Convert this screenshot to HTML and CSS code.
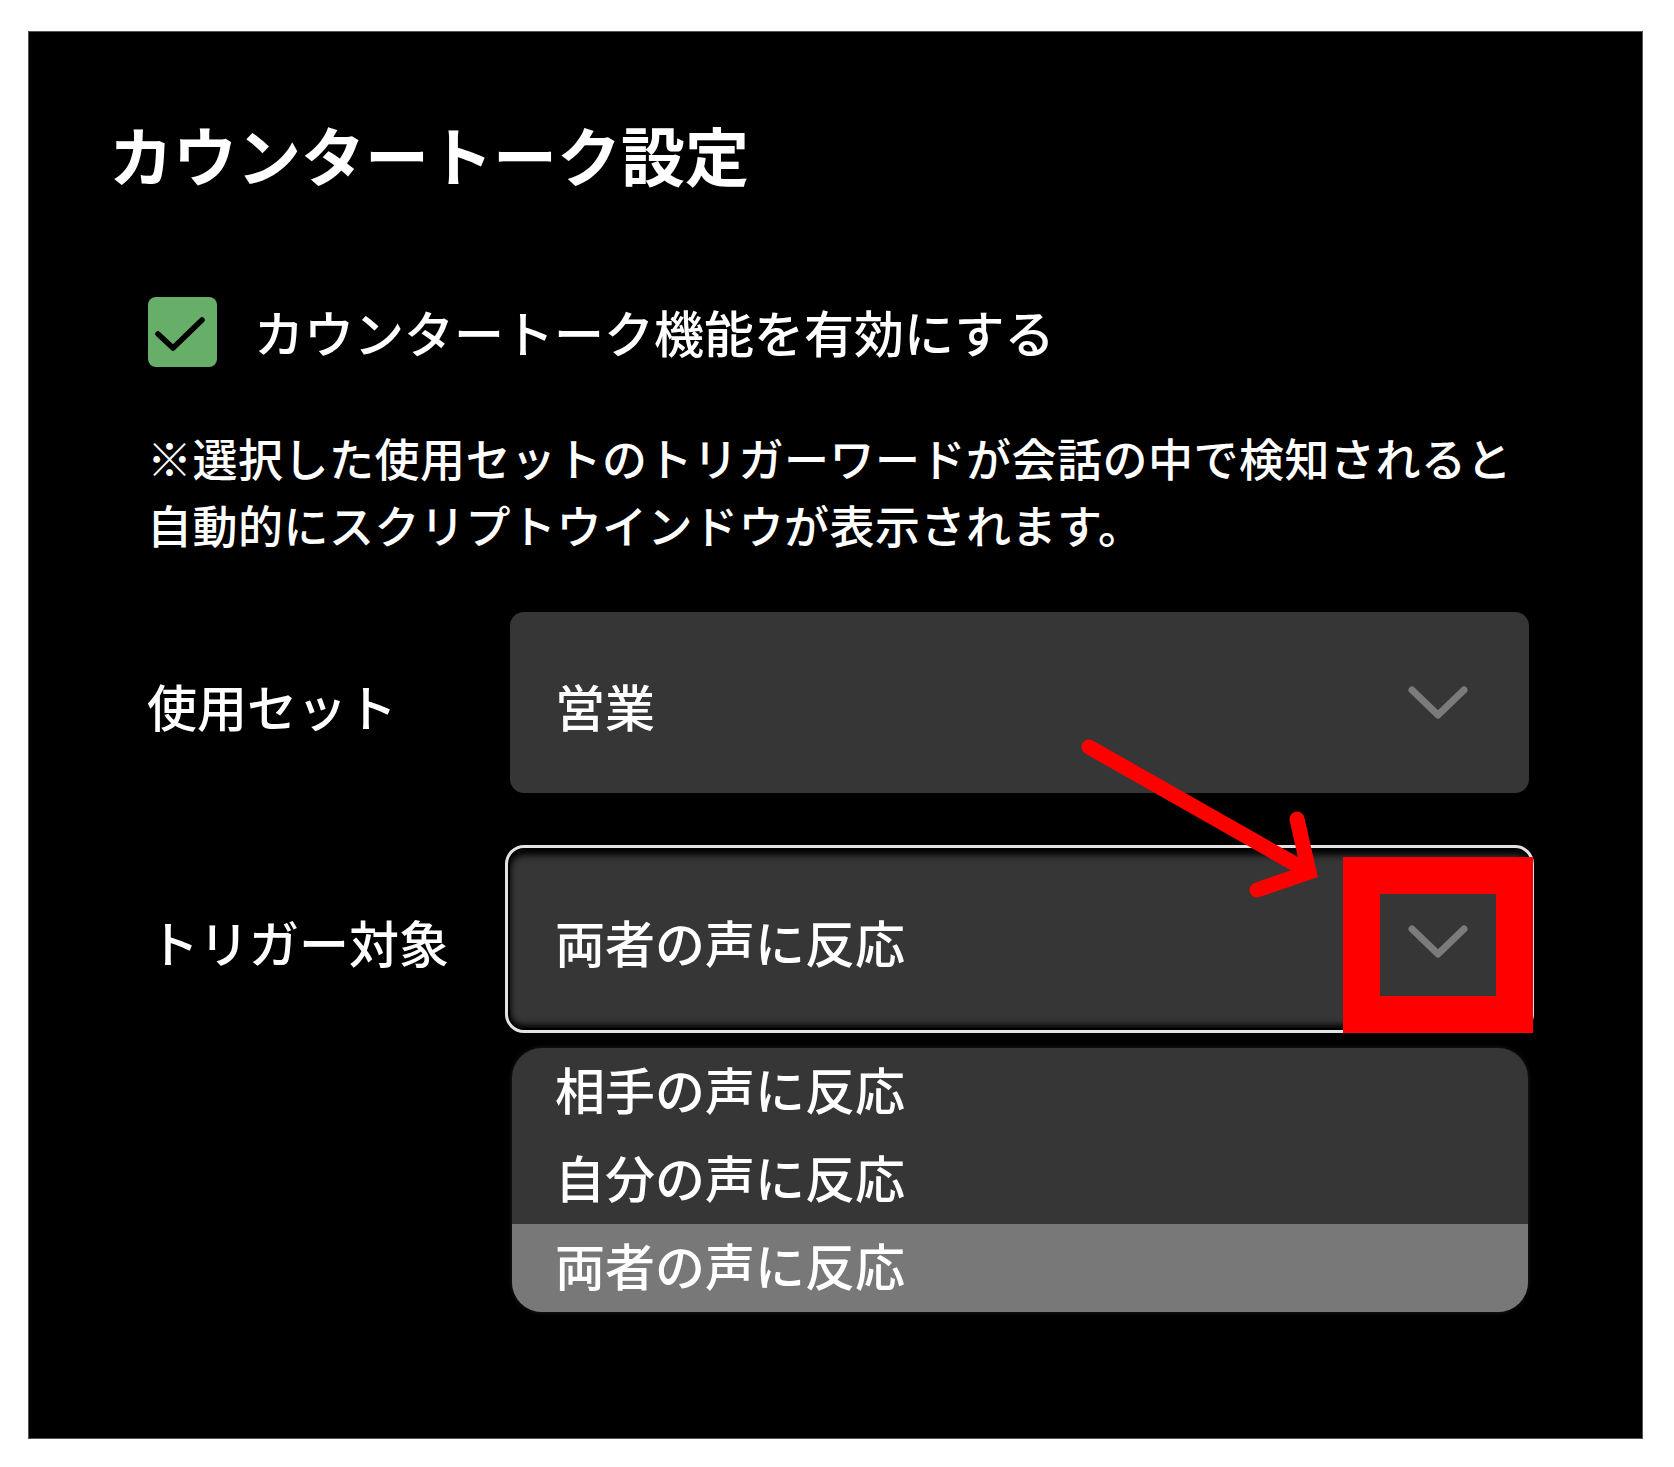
FILE: index.html
```html
<!DOCTYPE html>
<html lang="ja">
<head>
	<meta charset="UTF-8">
	<title>カウンタートーク設定</title>
	<link rel="stylesheet" href="styles.css">
</head>
<body>
	<div class="panel">
		<h1 class="title">カウンタートーク設定</h1>
		<div class="content">
			<label class="check-row">
				<span class="checkbox">
					<svg width="70" height="71" viewBox="0 0 70 71"><path d="M10 37 L25 51 L54 23" fill="none" stroke="#000" stroke-width="5.5" stroke-linecap="round" stroke-linejoin="round"/></svg>
				</span>
				<span class="check-label">カウンタートーク機能を有効にする</span>
			</label>
			<p class="note">※選択した使用セットのトリガーワードが会話の中で検知されると<br>自動的にスクリプトウインドウが表示されます。</p>

			<div class="field">
				<div class="field-label">使用セット</div>
				<div class="field-control">
					<div class="select">
						<span class="select-text">営業</span>
						<svg class="chevron" width="60" height="34" viewBox="0 0 60 34"><path d="M4 4 L30 29 L56 4" fill="none" stroke="#7b7b7b" stroke-width="7" stroke-linecap="round" stroke-linejoin="round"/></svg>
					</div>
				</div>
			</div>

			<div class="field trigger">
				<div class="field-label">トリガー対象</div>
				<div class="field-control">
					<div class="select open">
						<span class="select-text">両者の声に反応</span>
						<svg class="chevron" width="60" height="34" viewBox="0 0 60 34"><path d="M4 4 L30 29 L56 4" fill="none" stroke="#7b7b7b" stroke-width="7" stroke-linecap="round" stroke-linejoin="round"/></svg>
					</div>
					<ul class="options">
						<li>相手の声に反応</li>
						<li>自分の声に反応</li>
						<li class="selected">両者の声に反応</li>
					</ul>
				</div>
			</div>
		</div>

		<!-- 注釈 -->
		<svg class="annot-arrow" width="1615" height="1408" viewBox="0 0 1615 1408">
			<line x1="1060" y1="715" x2="1280" y2="840" stroke="#ff0000" stroke-width="15" stroke-linecap="round"/>
			<polyline points="1268,787 1280,840 1228,858" fill="none" stroke="#ff0000" stroke-width="15" stroke-linecap="round" stroke-linejoin="miter"/>
		</svg>
		<div class="annot-box"></div>
	</div>
</body>
</html>
```

FILE: styles.css
```css
*{
	margin: 0;
	padding: 0;
	box-sizing: border-box;
}
body{
	background-color: #fff;
	font-family: "Noto Sans CJK JP", sans-serif;
	font-weight: 500;
	color: #fff;
}
.panel{
	position: relative;
	width: 1615px;
	height: 1408px;
	margin: 31px 0 0 28px;
	background-color: #000;
	border: 1px solid #555;
	padding-top: 86px;
}
.title{
	font-size: 64px;
	font-weight: 700;
	line-height: 70px;
	padding-left: 80px;
	white-space: nowrap;
}
.content{
	padding-left: 118px;
}

/* チェックボックス */
.check-row{
	display: flex;
	align-items: center;
	height: 71px;
	margin-top: 108px;
}
.checkbox{
	width: 69px;
	height: 70px;
	margin-left: 1px;
	border-radius: 8px;
	background-color: #67ae68;
	display: block;
}
.checkbox svg{
	display: block;
}
.check-label{
	font-size: 50px;
	line-height: 71px;
	margin-left: 37px;
	white-space: nowrap;
}
.note{
	margin-top: 57px;
	font-size: 45px;
	line-height: 67px;
	letter-spacing: 0.5px;
	white-space: nowrap;
}

/* 設定項目 */
.field{
	display: flex;
	margin-top: 54px;
}
.field.trigger{
	margin-top: 57px;
}
.field-label{
	width: 363px;
	height: 181px;
	display: flex;
	align-items: center;
	padding-top: 5px;
	font-size: 50px;
	white-space: nowrap;
}
.trigger .field-label{
	height: 178px;
	padding-top: 4px;
	padding-left: 2px;
}
.field-control{
	width: 1019px;
}
.select{
	height: 181px;
	display: flex;
	align-items: center;
	justify-content: space-between;
	padding: 5px 61px 0 45px;
	background-color: #363636;
	border-radius: 14px;
	font-size: 50px;
}
.select .chevron{
	display: block;
	margin-top: -5px;
}
.select.open{
	height: 178px;
	padding-top: 3px;
	outline: 3px solid #e2e2e2;
	outline-offset: 2px;
	box-shadow: inset 0 6px 7px -1px #000, inset 0 -5px 6px -2px #000;
}
.select.open .chevron{
	margin-top: 2px;
}

/* ドロップダウン */
.options{
	list-style: none;
	margin: 20px 1px 0 2px;
	background-color: #363636;
	border-radius: 30px;
	overflow: hidden;
	box-shadow: 0 0 4px #222;
}
.options li{
	height: 88px;
	line-height: 80px;
	padding-left: 43px;
	font-size: 50px;
}
.options li.selected{
	background-color: #787878;
}

/* 注釈(赤枠と矢印) */
.annot-arrow{
	position: absolute;
	left: 0;
	top: 0;
}
.annot-box{
	position: absolute;
	left: 1314px;
	top: 825px;
	width: 190px;
	height: 176px;
	border: 37px solid #ff0000;
}
```
